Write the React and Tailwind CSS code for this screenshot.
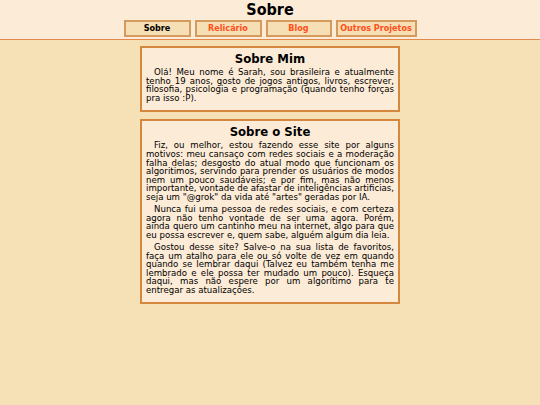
export default function App() {
  const cond = { fontFamily: '"DejaVu Sans Condensed", "DejaVu Sans", Verdana, sans-serif' };
  const body = { fontFamily: '"DejaVu Sans", Verdana, sans-serif' };
  const navItems = [
    { label: "Sobre", w: "w-[67px]", active: true },
    { label: "Relicário", w: "w-[67px]" },
    { label: "Blog", w: "w-[66px]" },
    { label: "Outros Projetos", w: "w-[81px]" },
  ];
  return (
    <div className="min-h-screen bg-[#f6e0b5] text-black" style={cond}>
      <header className="bg-[#fcebd6] border-b border-[#e08a50] flex flex-col items-center pb-[1px]">
        <h1 className="text-[16px] font-bold leading-[20px] mt-[0px]">Sobre</h1>
        <nav className="flex gap-[4px] mb-[1px]">
          {navItems.map((n) => (
            <a
              key={n.label}
              className={`${n.w} h-[17px] flex items-center justify-center bg-[#f6dfb4] border-2 border-[#d49a5e] text-[9px] font-bold leading-none whitespace-nowrap ${n.active ? "text-black" : "text-[#ff4f1a]"}`}
            >
              {n.label}
            </a>
          ))}
        </nav>
      </header>
      <main className="flex flex-col items-center gap-[7px] pt-[6px]">
        <section className="w-[260px] bg-[#fcebd6] border-2 border-[#d4883e] px-[4px] pt-[3px] pb-[8px]">
          <h2 className="text-[13px] font-bold text-center leading-[16px] mb-[1px]">Sobre Mim</h2>
          <p className="text-[8.6px] leading-[8.6px] text-justify indent-[8px]" style={body}>
            Olá! Meu nome é Sarah, sou brasileira e atualmente tenho 19 anos, gosto de jogos antigos, livros, escrever, filosofia, psicologia e programação (quando tenho forças pra isso :P).
          </p>
        </section>
        <section className="w-[260px] bg-[#fcebd6] border-2 border-[#d4883e] px-[4px] pt-[3px] pb-[8px]">
          <h2 className="text-[13px] font-bold text-center leading-[16px] mb-[1px]">Sobre o Site</h2>
          <div className="flex flex-col gap-[3.5px] text-[8.6px] leading-[8.6px] text-justify" style={body}>
            <p className="indent-[8px]">
              Fiz, ou melhor, estou fazendo esse site por alguns motivos: meu cansaço com redes sociais e a moderação falha delas; desgosto do atual modo que funcionam os algoritimos, servindo para prender os usuários de modos nem um pouco saudáveis; e por fim, mas não menos importante, vontade de afastar de inteligências artificias, seja um "@grok" da vida até "artes" geradas por IA.
            </p>
            <p className="indent-[8px]">
              Nunca fui uma pessoa de redes sociais, e com certeza agora não tenho vontade de ser uma agora. Porém, ainda quero um cantinho meu na internet, algo para que eu possa escrever e, quem sabe, alguém algum dia leia.
            </p>
            <p className="indent-[8px]">
              Gostou desse site? Salve-o na sua lista de favoritos, faça um atalho para ele ou só volte de vez em quando quando se lembrar daqui (Talvez eu também tenha me lembrado e ele possa ter mudado um pouco). Esqueça daqui, mas não espere por um algorítimo para te entregar as atualizações.
            </p>
          </div>
        </section>
      </main>
    </div>
  );
}
